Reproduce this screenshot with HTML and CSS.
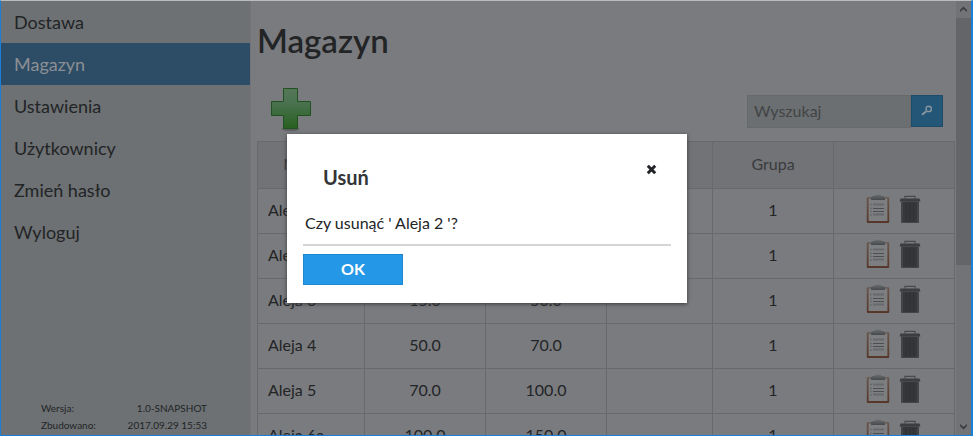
FILE: index.html
```html
<!DOCTYPE html>
<html lang="pl">
<head>
<meta charset="utf-8">
<title>Magazyn</title>
<link rel="stylesheet" href="styles.css">
</head>
<body>
<svg width="0" height="0" class="defs">
  <defs>
    <linearGradient id="green" x1="0" y1="0" x2="0" y2="1"><stop offset="0" stop-color="#567758"/><stop offset=".35" stop-color="#4b7250"/><stop offset="1" stop-color="#286020"/></linearGradient>
    <linearGradient id="wood" x1="0" y1="0" x2="0" y2="1"><stop offset="0" stop-color="#66564d"/><stop offset="1" stop-color="#573629"/></linearGradient>
    <linearGradient id="clip" x1="0" y1="0" x2="0" y2="1"><stop offset="0" stop-color="#6a6c6e"/><stop offset="1" stop-color="#46494b"/></linearGradient>
    <symbol id="note" viewBox="0 0 24 30">
      <rect x=".8" y="3.2" width="22.4" height="25.8" rx="1" fill="url(#wood)"/>
      <rect x="2.6" y="4.5" width="18.8" height="22.5" fill="#7d7e80"/>
      <path d="M9 .7h6v1.3h3l1 2v2H5V4l1-2h3z" fill="url(#clip)"/>
      <path d="M4 10.5h2M4 14.5h2M4 17.5h2M4 21h2" stroke="#6a6b6d" stroke-width="1.5"/>
      <path d="M7 10.5h11M7 20.5h11" stroke="#68696c" stroke-width="2"/>
      <path d="M7 14.5h11M7 17.5h11" stroke="#4c4e51"/>
    </symbol>
    <symbol id="trash" viewBox="0 0 22 30">
      <path d="M6 4.5V2.3h10v2.2" fill="none" stroke="#48494c" stroke-width="1.2"/>
      <path d="M1.5 4.5h19l1 3H.5z" fill="#3c3d40"/>
      <path d="M2.2 7.5h17.6v21.3H2.2z" fill="#36373a"/>
      <path d="M3.5 8v20M18.5 8v20" stroke="#434447" stroke-width="1.2"/>
      <path d="M7.5 9v18M11 9v18M14.5 9v18" stroke="#303134"/>
    </symbol>
  </defs>
</svg>
<div class="window">
  <nav class="sidebar">
    <ul class="menu">
      <li>Dostawa</li><li class="active">Magazyn</li><li>Ustawienia</li><li>Użytkownicy</li><li>Zmień hasło</li><li>Wyloguj</li>
    </ul>
    <dl class="version"><dt>Wersja:</dt><dd>1.0-SNAPSHOT</dd><dt>Zbudowano:</dt><dd>2017.09.29 15:53</dd></dl>
  </nav>
  <main class="content">
    <h1>Magazyn</h1>
    <div class="toolbar">
      <svg class="add" width="44" height="46" viewBox="0 0 44 46"><ellipse cx="21.5" cy="43" rx="9" ry="2" fill="#5f6062"/><path d="M14.5 2.5h14v13h13v14h-13v13h-14v-13h-12v-14h12z" fill="url(#green)" stroke="#20521f"/></svg>
      <div class="search"><span class="field">Wyszukaj</span><span class="go"><svg width="12" height="12" viewBox="0 0 12 12" fill="none" stroke="#8a979f"><path d="M5.2 2.5l1-1h3l1 1v3l-1 1h-3l-1-1z" stroke-width="1.4"/><path d="M5 6.5L1 9.8" stroke-width="2"/></svg></span></div>
    </div>
    <table>
      <colgroup><col class="c-name"><col class="c-num"><col class="c-num"><col class="c-empty"><col class="c-num"><col class="c-num"></colgroup>
      <thead><tr><th class="name">Nazwa</th><th></th><th></th><th></th><th>Grupa</th><th></th></tr></thead>
      <tbody>
        <tr><td>Aleja 1</td><td></td><td></td><td></td><td>1</td><td class="actions"><svg><use href="#note"/></svg><svg><use href="#trash"/></svg></td></tr>
        <tr><td>Aleja 2</td><td></td><td></td><td></td><td>1</td><td class="actions"><svg><use href="#note"/></svg><svg><use href="#trash"/></svg></td></tr>
        <tr><td>Aleja 3</td><td>15.0</td><td>50.0</td><td></td><td>1</td><td class="actions"><svg><use href="#note"/></svg><svg><use href="#trash"/></svg></td></tr>
        <tr><td>Aleja 4</td><td>50.0</td><td>70.0</td><td></td><td>1</td><td class="actions"><svg><use href="#note"/></svg><svg><use href="#trash"/></svg></td></tr>
        <tr><td>Aleja 5</td><td>70.0</td><td>100.0</td><td></td><td>1</td><td class="actions"><svg><use href="#note"/></svg><svg><use href="#trash"/></svg></td></tr>
        <tr><td>Aleja 6a</td><td>100.0</td><td>150.0</td><td></td><td>1</td><td class="actions"><svg><use href="#note"/></svg><svg><use href="#trash"/></svg></td></tr>
      </tbody>
    </table>
  </main>
  <div class="scrollbar">
    <svg width="15" height="17" viewBox="0 0 15 17"><path d="M4 11V9l3.5-3.5L11 9v2L7.5 8z" fill="#3a3b3d"/></svg>
    <div class="thumb"></div>
    <svg class="down" width="15" height="17" viewBox="0 0 15 17"><path d="M4 6v2l3.5 3.5L11 8V6L7.5 9z" fill="#3a3b3d"/></svg>
  </div>
</div>
<section class="dialog">
  <header><h2>Usuń</h2><svg width="11" height="11" viewBox="0 0 11 11"><path d="M1.8 1.8l7.4 7.4M9.2 1.8L1.8 9.2" stroke="#222326" stroke-width="3"/></svg></header>
  <p>Czy usunąć ' Aleja 2 '?</p>
  <button>OK</button>
</section>
</body>
</html>
```
FILE: styles.css
```css
* { box-sizing: border-box; }
body { margin: 0; height: 438px; overflow: hidden; background: #fff; font-family: Lato, sans-serif; font-size: 16px; color: #222426; }
.defs { display: block; height: 0; }
.window { display: flex; width: 973px; height: 436px; overflow: hidden; background: #7a7b7e; border: 1px solid #1a7fd6; border-top-color: #b9bcbb; border-right-width: 2px; }
.sidebar { display: flex; flex-direction: column; justify-content: space-between; width: 250px; background: #6d7173; border-right: 1px solid #737477; }
.menu { list-style: none; margin: 0; padding: 0; font-size: 18px; }
.menu li { height: 42px; line-height: 43px; padding-left: 13px; }
.menu .active { background: #2d4c65; color: #8b8f94; }
.version { display: grid; grid-template-columns: 1fr 1fr; width: 166px; margin: 0 0 1px 40px; font-size: 10px; line-height: 17px; white-space: nowrap; }
.version dd { margin: 0; justify-self: end; }
.content { width: 705px; padding-left: 6px; }
h1 { margin: 0; height: 82px; line-height: 78px; font-size: 33px; font-weight: 600; }
.toolbar { display: flex; justify-content: space-between; width: 686px; height: 58px; padding-left: 12px; }
.add { margin-top: 3px; }
.search { display: flex; width: 196px; height: 33px; margin-top: 12px; }
.field { width: 164px; border: 1px solid #67696b; background: #6b6f71; color: #424446; padding-left: 6px; line-height: 30px; }
.go { display: flex; align-items: center; justify-content: center; width: 32px; height: 32px; background: #245678; border: 1px solid #1d4b6b; }
table { table-layout: fixed; width: 698px; border-collapse: collapse; }
.c-name { width: 107px; } .c-num { width: 121px; } .c-empty { width: 106px; }
th, td { border: 1px solid #68696c; padding: 0 0 4px; text-align: center; }
th { height: 47px; background: #727376; font-weight: 400; color: #393b3d; }
th.name { padding-right: 8px; }
td { height: 45px; }
td:first-child { text-align: left; padding-left: 10px; }
.actions { font-size: 0; padding-right: 2px; }
.actions svg { width: 24px; height: 30px; vertical-align: middle; }
.actions svg + svg { width: 22px; margin-left: 9px; }
.scrollbar { display: flex; flex-direction: column; width: 15px; background: #727376; }
.thumb { height: 247px; background: #646568; }
.down { margin-top: auto; }
.dialog { position: absolute; left: 287px; top: 134px; width: 400px; height: 169px; padding: 0 16px; background: #fff; box-shadow: 0 1px 4px #38393c; }
.dialog header { display: flex; justify-content: space-between; padding: 30px 14px 0 20px; height: 74px; }
.dialog h2 { margin: 0; font-size: 20px; line-height: 26px; color: #333538; }
.dialog p { margin: 0 0 8px; height: 38px; padding-left: 2px; line-height: 29px; border-bottom: 2px solid #d5d5d5; }
.dialog button { display: block; width: 100px; height: 31px; padding: 0 0 2px; border: 1px solid #1e87d1; background: #2498e6; color: #fff; font: 700 16px/27px Lato, sans-serif; }
```
